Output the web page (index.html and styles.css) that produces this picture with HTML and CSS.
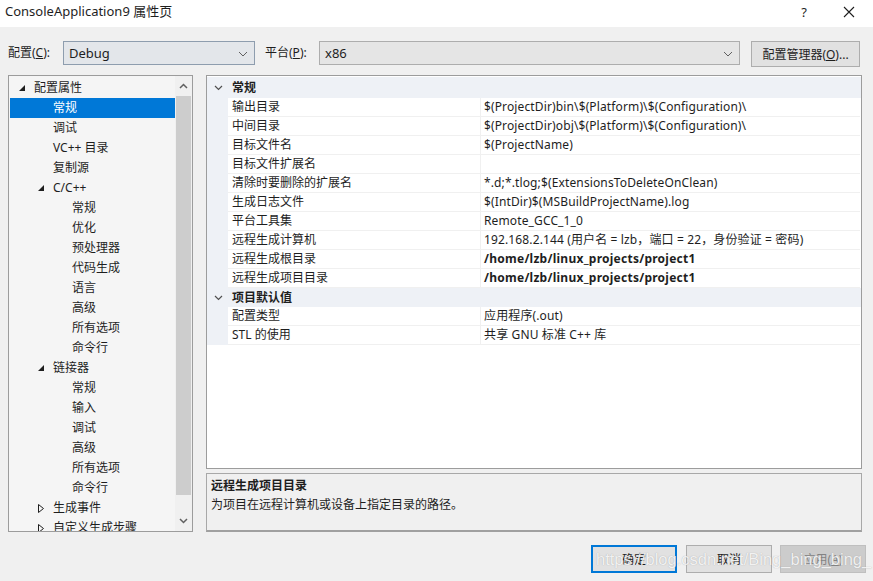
FILE: index.html
```html
<!DOCTYPE html>
<html lang="zh">
<head>
<meta charset="utf-8">
<title>ConsoleApplication9 属性页</title>
<link rel="stylesheet" href="styles.css">
</head>
<body>
<div class="window">
  <div class="titlebar">
    <span class="title">ConsoleApplication9 属性页</span>
    <span class="tb-btn help">?</span>
    <span class="tb-btn close">
      <svg width="12" height="12" viewBox="0 0 12 12"><path d="M1 1L11 11M11 1L1 11" stroke="#1e1e1e" stroke-width="1.1" fill="none"/></svg>
    </span>
  </div>

  <div class="toolbar">
    <span class="lbl cfg-lbl">配置(<u>C</u>):</span>
    <div class="combo combo-cfg">
      <span>Debug</span>
      <svg class="chev" width="10" height="6" viewBox="0 0 10 6"><path d="M1 1L5 5L9 1" stroke="#606060" stroke-width="1" fill="none"/></svg>
    </div>
    <span class="lbl plat-lbl">平台(<u>P</u>):</span>
    <div class="combo combo-plat">
      <span>x86</span>
      <svg class="chev" width="10" height="6" viewBox="0 0 10 6"><path d="M1 1L5 5L9 1" stroke="#606060" stroke-width="1" fill="none"/></svg>
    </div>
    <button class="btn mgr">配置管理器(<u>O</u>)...</button>
  </div>

  <div class="main">
    <div class="tree">
      <ul class="tree-list">
        <li class="ti l0"><span class="tw"><svg width="6" height="6" viewBox="0 0 6 6"><path d="M6 0L6 6L0 6Z" fill="#1e1e1e"/></svg></span>配置属性</li>
        <li class="ti l1 sel"><span class="tw"></span>常规</li>
        <li class="ti l1"><span class="tw"></span>调试</li>
        <li class="ti l1"><span class="tw"></span>VC++ 目录</li>
        <li class="ti l1"><span class="tw"></span>复制源</li>
        <li class="ti l1"><span class="tw"><svg width="6" height="6" viewBox="0 0 6 6"><path d="M6 0L6 6L0 6Z" fill="#1e1e1e"/></svg></span>C/C++</li>
        <li class="ti l2"><span class="tw"></span>常规</li>
        <li class="ti l2"><span class="tw"></span>优化</li>
        <li class="ti l2"><span class="tw"></span>预处理器</li>
        <li class="ti l2"><span class="tw"></span>代码生成</li>
        <li class="ti l2"><span class="tw"></span>语言</li>
        <li class="ti l2"><span class="tw"></span>高级</li>
        <li class="ti l2"><span class="tw"></span>所有选项</li>
        <li class="ti l2"><span class="tw"></span>命令行</li>
        <li class="ti l1"><span class="tw"><svg width="6" height="6" viewBox="0 0 6 6"><path d="M6 0L6 6L0 6Z" fill="#1e1e1e"/></svg></span>链接器</li>
        <li class="ti l2"><span class="tw"></span>常规</li>
        <li class="ti l2"><span class="tw"></span>输入</li>
        <li class="ti l2"><span class="tw"></span>调试</li>
        <li class="ti l2"><span class="tw"></span>高级</li>
        <li class="ti l2"><span class="tw"></span>所有选项</li>
        <li class="ti l2"><span class="tw"></span>命令行</li>
        <li class="ti l1"><span class="tw"><svg width="6" height="9" viewBox="0 0 6 9"><path d="M0.5 0.5L5.5 4.5L0.5 8.5Z" fill="none" stroke="#1e1e1e" stroke-width="1"/></svg></span>生成事件</li>
        <li class="ti l1"><span class="tw"><svg width="6" height="9" viewBox="0 0 6 9"><path d="M0.5 0.5L5.5 4.5L0.5 8.5Z" fill="none" stroke="#1e1e1e" stroke-width="1"/></svg></span>自定义生成步骤</li>
      </ul>
      <div class="vscroll">
        <div class="sb-arrow"><svg width="9" height="6" viewBox="0 0 9 6"><path d="M1 5L4.5 1.5L8 5" stroke="#606060" stroke-width="1.5" fill="none"/></svg></div>
        <div class="sb-track"><div class="sb-thumb"></div></div>
        <div class="sb-arrow"><svg width="9" height="6" viewBox="0 0 9 6"><path d="M1 1L4.5 4.5L8 1" stroke="#606060" stroke-width="1.5" fill="none"/></svg></div>
      </div>
    </div>

    <div class="right">
      <div class="grid">
        <div class="row cat">
          <span class="gut"><svg width="9" height="6" viewBox="0 0 9 6"><path d="M1 1L4.5 4.5L8 1" stroke="#505050" stroke-width="1.2" fill="none"/></svg></span>
          <span class="cat-name">常规</span>
        </div>
        <div class="row"><span class="gut"></span><span class="nm">输出目录</span><span class="vl">$(ProjectDir)bin\$(Platform)\$(Configuration)\</span></div>
        <div class="row"><span class="gut"></span><span class="nm">中间目录</span><span class="vl">$(ProjectDir)obj\$(Platform)\$(Configuration)\</span></div>
        <div class="row"><span class="gut"></span><span class="nm">目标文件名</span><span class="vl">$(ProjectName)</span></div>
        <div class="row"><span class="gut"></span><span class="nm">目标文件扩展名</span><span class="vl"></span></div>
        <div class="row"><span class="gut"></span><span class="nm">清除时要删除的扩展名</span><span class="vl">*.d;*.tlog;$(ExtensionsToDeleteOnClean)</span></div>
        <div class="row"><span class="gut"></span><span class="nm">生成日志文件</span><span class="vl">$(IntDir)$(MSBuildProjectName).log</span></div>
        <div class="row"><span class="gut"></span><span class="nm">平台工具集</span><span class="vl">Remote_GCC_1_0</span></div>
        <div class="row"><span class="gut"></span><span class="nm">远程生成计算机</span><span class="vl">192.168.2.144 (用户名 = lzb，端口 = 22，身份验证 = 密码)</span></div>
        <div class="row"><span class="gut"></span><span class="nm">远程生成根目录</span><span class="vl bold">/home/lzb/linux_projects/project1</span></div>
        <div class="row"><span class="gut"></span><span class="nm">远程生成项目目录</span><span class="vl bold">/home/lzb/linux_projects/project1</span></div>
        <div class="row cat">
          <span class="gut"><svg width="9" height="6" viewBox="0 0 9 6"><path d="M1 1L4.5 4.5L8 1" stroke="#505050" stroke-width="1.2" fill="none"/></svg></span>
          <span class="cat-name">项目默认值</span>
        </div>
        <div class="row"><span class="gut"></span><span class="nm">配置类型</span><span class="vl">应用程序(.out)</span></div>
        <div class="row"><span class="gut"></span><span class="nm">STL 的使用</span><span class="vl">共享 GNU 标准 C++ 库</span></div>
      </div>
      <div class="desc">
        <div class="desc-title">远程生成项目目录</div>
        <div class="desc-text">为项目在远程计算机或设备上指定目录的路径。</div>
      </div>
    </div>
  </div>

  <div class="footer">
    <button class="btn fbtn default">确定</button>
    <button class="btn fbtn">取消</button>
    <button class="btn fbtn disabled">应用(<u>A</u>)</button>
    <div class="watermark">https://blog.csdn.net/Bing_bing_bing_</div>
  </div>
</div>
</body>
</html>
```

FILE: styles.css
```css
* { box-sizing: border-box; }
html, body { margin: 0; padding: 0; }
body {
  background: #f0f0f0;
  font-family: "Noto Sans", "Noto Sans CJK SC", sans-serif;
  font-size: 12px;
  color: #1e1e1e;
}
.window {
  width: 873px;
  height: 581px;
  position: relative;
  overflow: hidden;
  background: #f0f0f0;
}
.titlebar {
  height: 27px;
  background: #ffffff;
  display: flex;
  align-items: center;
  padding-left: 5px;
}
.title {
  font-size: 13px;
  flex: 1;
  line-height: 16px;
  margin-top: -5px;
}
.tb-btn {
  display: flex;
  align-items: center;
  justify-content: center;
  margin-top: -4px;
}
.help { width: 20px; font-size: 13px; margin-right: 25px; }
.close { width: 20px; margin-right: 14px; }

.toolbar {
  display: flex;
  align-items: flex-start;
  padding: 14px 0 0 8px;
  height: 48px;
}
.lbl { line-height: 24px; height: 24px; }
.cfg-lbl { width: 55px; }
.plat-lbl { width: 54px; margin-left: 10px; }
.combo {
  height: 24px;
  display: flex;
  align-items: center;
  justify-content: space-between;
  padding: 0 6px 0 5px;
  font-size: 13px;
}
.combo-cfg { width: 192px; background: #e3e6ea; border: 1px solid #8e9dae; }
.combo-plat { width: 421px; background: #e5e5e5; border: 1px solid #adadad; }
.chev { margin-top: 1px; }
.btn {
  font-family: inherit;
  font-size: 12px;
  color: #1e1e1e;
  background: #e1e1e1;
  border: 1px solid #adadad;
  padding: 0;
  margin: 0;
}
.mgr { width: 109px; height: 26px; margin-left: 11px; }

.main {
  display: flex;
  padding-left: 8px;
  height: 457px;
}
.tree {
  width: 185px;
  height: 457px;
  border: 1px solid #9c9c9c;
  background: #f5f5f5;
  display: flex;
  overflow: hidden;
}
.tree-list {
  list-style: none;
  margin: 0;
  padding: 2px 0 0 1px;
  width: 166px;
  overflow: hidden;
}
.ti {
  height: 20px;
  line-height: 20px;
  display: flex;
  align-items: center;
  white-space: nowrap;
  font-size: 12px;
}
.ti.l0 { padding-left: 9px; }
.ti.l1 { padding-left: 28px; }
.ti.l2 { padding-left: 47px; }
.tw {
  width: 15px;
  flex: none;
  display: flex;
  align-items: center;
  height: 20px;
}
.ti.sel { background: #0078d7; color: #ffffff; }

.vscroll {
  width: 17px;
  display: flex;
  flex-direction: column;
  background: #f0f0f0;
}
.sb-arrow {
  height: 20px;
  display: flex;
  align-items: center;
  justify-content: center;
}
.sb-track { flex: 1; padding: 0 1px 0 1px; }
.sb-thumb { height: 399px; background: #cdcdcd; }

.right {
  margin-left: 13px;
  width: 656px;
  display: flex;
  flex-direction: column;
}
.grid {
  height: 395px;
  border: 1px solid #9c9c9c;
  background: #ffffff;
  padding-top: 1px;
}
.row {
  display: flex;
  height: 19px;
  line-height: 18px;
}
.row:first-child { height: 21px; }
.gut {
  width: 21px;
  flex: none;
  background: #eef1f6;
  display: flex;
  align-items: center;
  justify-content: center;
  padding-left: 2px;
}
.nm {
  width: 253px;
  flex: none;
  padding-left: 4px;
  border-bottom: 1px solid #f0f0f0;
  border-right: 1px solid #f0f0f0;
  white-space: nowrap;
}
.vl {
  flex: 1;
  padding-left: 3px;
  border-bottom: 1px solid #f0f0f0;
  white-space: nowrap;
  margin-right: 1px;
  letter-spacing: 0.13px;
}
.vl.bold { font-weight: bold; letter-spacing: 0.25px; }
.cat { background: #eef1f6; }
.cat .cat-name { font-weight: bold; padding-left: 4px; line-height: 19px; }
.row:first-child .cat-name { line-height: 21px; }

.desc {
  margin-top: 4px;
  height: 59px;
  border: 1px solid #a8a8a8;
  border-bottom: 2px solid #a0a0a0;
  background: #f0f0f0;
  padding: 2px 0 0 4px;
}
.desc-title { font-weight: bold; line-height: 19px; }
.desc-text { line-height: 19px; }

.footer {
  display: flex;
  justify-content: flex-end;
  padding: 13px 7px 0 0;
  gap: 9px;
  position: relative;
}
.fbtn { width: 86px; height: 28px; }
.fbtn.default { border: 2px solid #0078d7; }
.fbtn.disabled { background: #cccccc; border-color: #bfbfbf; color: #838383; margin-left: -1px; }
.watermark {
  position: absolute;
  left: 596px;
  top: 18px;
  font-family: "Liberation Sans", Arial, sans-serif;
  font-size: 16.5px;
  color: rgba(255,255,255,0.85);
  text-shadow: 0 0 1px rgba(120,120,120,0.6);
  white-space: nowrap;
  pointer-events: none;
}
```
